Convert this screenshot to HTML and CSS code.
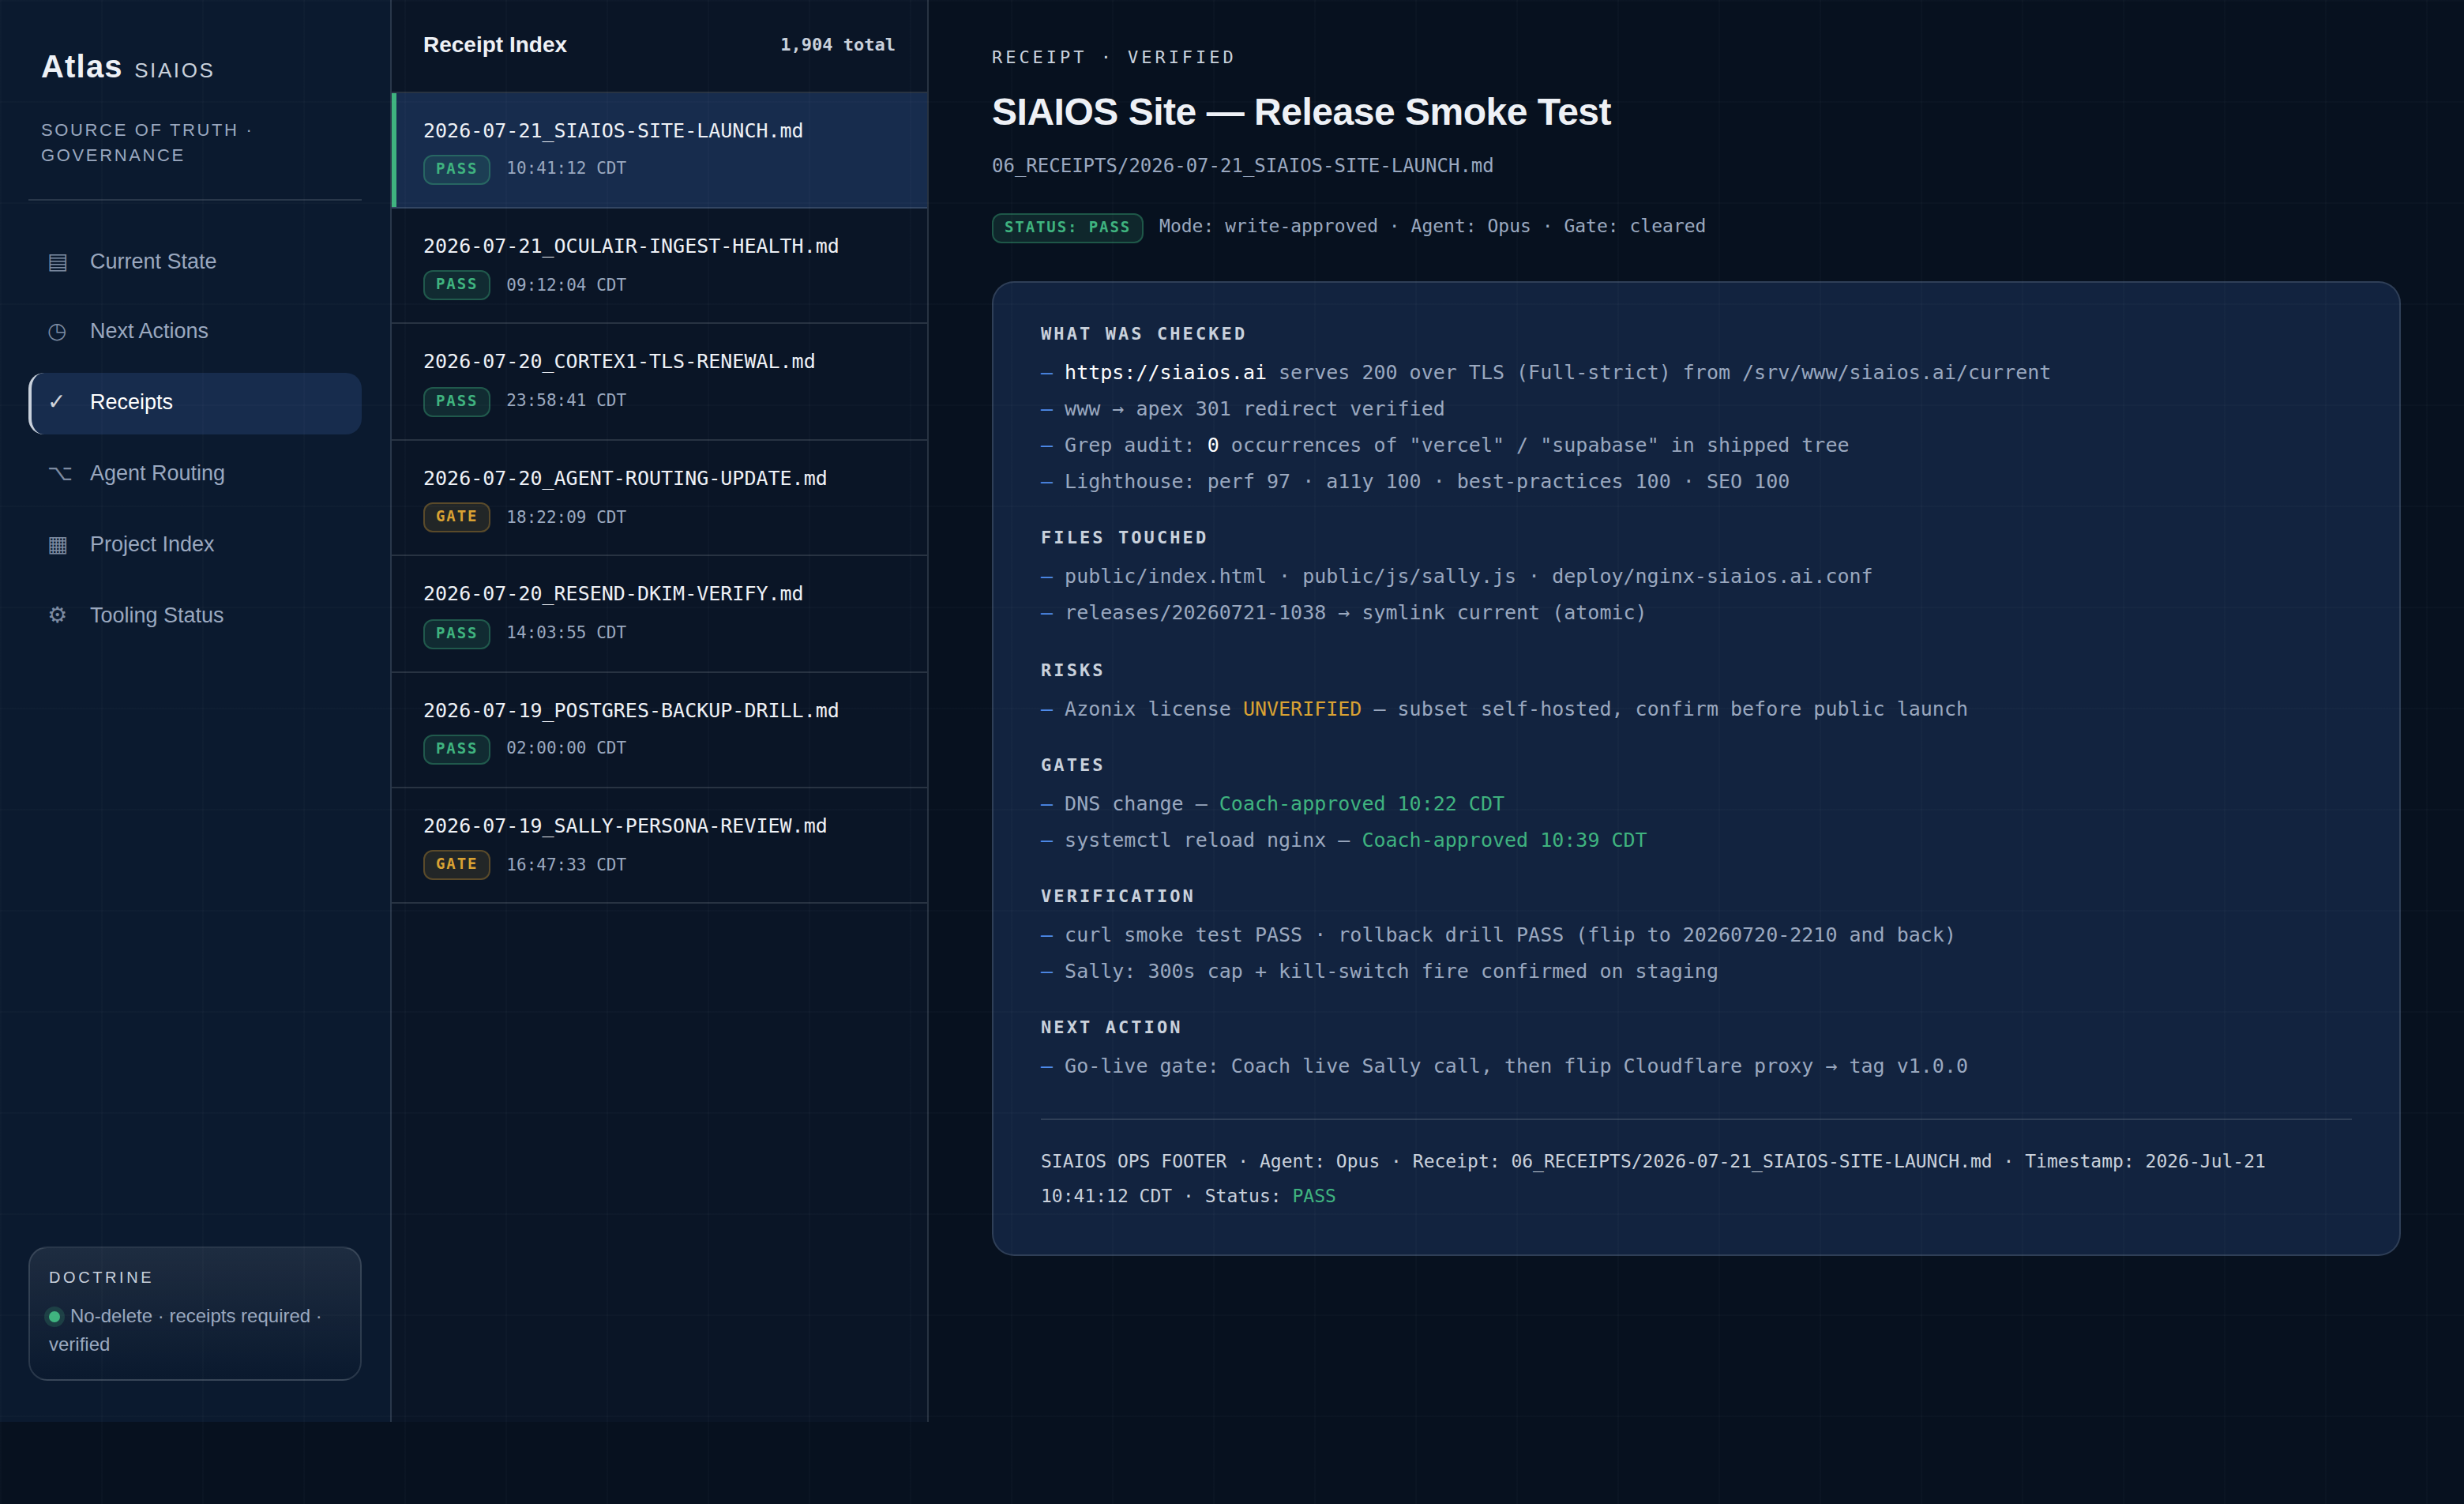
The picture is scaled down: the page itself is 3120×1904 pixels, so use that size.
FILE: index.html
```html
<!DOCTYPE html>
<html lang="en">
<head>
    <meta charset="UTF-8">
    <meta name="viewport" content="width=device-width, initial-scale=1.0">
    <title>Atlas — Receipts</title>
    <link rel="stylesheet" href="styles.css">
</head>
<body>
    <div class="app">
        <aside class="sidebar">
            <div class="brand">
                <div class="logo">Atlas <span>SIAIOS</span></div>
                <div class="tagline">SOURCE OF TRUTH · GOVERNANCE</div>
            </div>
            <nav class="nav">
                <a class="nav-item"><span class="icon">▤</span>Current State</a>
                <a class="nav-item"><span class="icon">◷</span>Next Actions</a>
                <a class="nav-item active"><span class="icon">✓</span>Receipts</a>
                <a class="nav-item"><span class="icon">⌥</span>Agent Routing</a>
                <a class="nav-item"><span class="icon">▦</span>Project Index</a>
                <a class="nav-item"><span class="icon">⚙</span>Tooling Status</a>
            </nav>
            <div class="doctrine">
                <div class="doctrine-title">DOCTRINE</div>
                <div class="doctrine-text"><span class="dot"></span>No-delete · receipts required · verified</div>
            </div>
        </aside>

        <section class="index">
            <header class="index-head">
                <h2>Receipt Index</h2>
                <span class="count">1,904 total</span>
            </header>
            <div class="receipts">
                <div class="receipt active">
                    <div class="name">2026-07-21_SIAIOS-SITE-LAUNCH.md</div>
                    <div class="meta"><span class="badge pass">PASS</span><span class="time">10:41:12 CDT</span></div>
                </div>
                <div class="receipt">
                    <div class="name">2026-07-21_OCULAIR-INGEST-HEALTH.md</div>
                    <div class="meta"><span class="badge pass">PASS</span><span class="time">09:12:04 CDT</span></div>
                </div>
                <div class="receipt">
                    <div class="name">2026-07-20_CORTEX1-TLS-RENEWAL.md</div>
                    <div class="meta"><span class="badge pass">PASS</span><span class="time">23:58:41 CDT</span></div>
                </div>
                <div class="receipt">
                    <div class="name">2026-07-20_AGENT-ROUTING-UPDATE.md</div>
                    <div class="meta"><span class="badge gate">GATE</span><span class="time">18:22:09 CDT</span></div>
                </div>
                <div class="receipt">
                    <div class="name">2026-07-20_RESEND-DKIM-VERIFY.md</div>
                    <div class="meta"><span class="badge pass">PASS</span><span class="time">14:03:55 CDT</span></div>
                </div>
                <div class="receipt">
                    <div class="name">2026-07-19_POSTGRES-BACKUP-DRILL.md</div>
                    <div class="meta"><span class="badge pass">PASS</span><span class="time">02:00:00 CDT</span></div>
                </div>
                <div class="receipt">
                    <div class="name">2026-07-19_SALLY-PERSONA-REVIEW.md</div>
                    <div class="meta"><span class="badge gate">GATE</span><span class="time">16:47:33 CDT</span></div>
                </div>
            </div>
        </section>

        <main class="detail">
            <div class="eyebrow">RECEIPT · VERIFIED</div>
            <h1>SIAIOS Site — Release Smoke Test</h1>
            <div class="path">06_RECEIPTS/2026-07-21_SIAIOS-SITE-LAUNCH.md</div>
            <div class="status">
                <span class="badge pass">STATUS: PASS</span>
                <span>Mode: write-approved · Agent: Opus · Gate: cleared</span>
            </div>

            <article class="card">
                <div class="block">
                    <h3>WHAT WAS CHECKED</h3>
                    <ul>
                        <li><b>https://siaios.ai</b> serves 200 over TLS (Full-strict) from /srv/www/siaios.ai/current</li>
                        <li>www → apex 301 redirect verified</li>
                        <li>Grep audit: <b>0</b> occurrences of "vercel" / "supabase" in shipped tree</li>
                        <li>Lighthouse: perf 97 · a11y 100 · best-practices 100 · SEO 100</li>
                    </ul>
                </div>
                <div class="block">
                    <h3>FILES TOUCHED</h3>
                    <ul>
                        <li>public/index.html · public/js/sally.js · deploy/nginx-siaios.ai.conf</li>
                        <li>releases/20260721-1038 → symlink current (atomic)</li>
                    </ul>
                </div>
                <div class="block">
                    <h3>RISKS</h3>
                    <ul>
                        <li>Azonix license <span class="warn">UNVERIFIED</span> — subset self-hosted, confirm before public launch</li>
                    </ul>
                </div>
                <div class="block">
                    <h3>GATES</h3>
                    <ul>
                        <li>DNS change — <span class="ok">Coach-approved 10:22 CDT</span></li>
                        <li>systemctl reload nginx — <span class="ok">Coach-approved 10:39 CDT</span></li>
                    </ul>
                </div>
                <div class="block">
                    <h3>VERIFICATION</h3>
                    <ul>
                        <li>curl smoke test PASS · rollback drill PASS (flip to 20260720-2210 and back)</li>
                        <li>Sally: 300s cap + kill-switch fire confirmed on staging</li>
                    </ul>
                </div>
                <div class="block">
                    <h3>NEXT ACTION</h3>
                    <ul>
                        <li>Go-live gate: Coach live Sally call, then flip Cloudflare proxy → tag v1.0.0</li>
                    </ul>
                </div>
                <footer class="ops-footer">SIAIOS OPS FOOTER · Agent: Opus · Receipt: 06_RECEIPTS/2026-07-21_SIAIOS-SITE-LAUNCH.md · Timestamp: 2026-Jul-21 10:41:12 CDT · Status: <span class="ok">PASS</span></footer>
            </article>
        </main>
    </div>
</body>
</html>
```
FILE: styles.css
```css
:root {
    --bg: #07111f;
    --sidebar: #0b1a2f;
    --panel: #0a1526;
    --card: #12233f;
    --active: #172c4d;
    --line: rgba(201, 209, 220, 0.16);
    --white: #eef1f6;
    --silver: #c9d1dc;
    --muted: #9aa8bf;
    --blue: #4f8cea;
    --green: #3fb37f;
    --amber: #d9a233;
    --mono: "DejaVu Sans Mono", monospace;
}
* {
    box-sizing: border-box;
    margin: 0;
    padding: 0;
}
body {
    height: 1904px;
    background-color: var(--bg);
    color: var(--white);
    font-family: "Liberation Sans", "DejaVu Sans", sans-serif;
    overflow: hidden;
}
/* faint grid over the whole page */
body::after {
    content: "";
    position: fixed;
    inset: 0;
    pointer-events: none;
    background-image:
        linear-gradient(rgba(201, 209, 220, 0.025) 2px, transparent 2px),
        linear-gradient(90deg, rgba(201, 209, 220, 0.025) 2px, transparent 2px);
    background-size: 128px 128px;
}
.app {
    display: grid;
    grid-template-columns: 496px 680px 1fr;
    height: 1800px;
}

/* Sidebar */
.sidebar {
    display: flex;
    flex-direction: column;
    padding: 56px 36px 52px;
    background-color: var(--sidebar);
    border-right: 2px solid var(--line);
}
.brand {
    padding: 0 16px 39px;
    border-bottom: 2px solid var(--line);
}
.logo {
    font-size: 40px;
    font-weight: bold;
    line-height: 56px;
    letter-spacing: 0.03em;
}
.logo span {
    margin-left: 2px;
    font-size: 26px;
    font-weight: normal;
    line-height: 1;
    letter-spacing: 0.1em;
    color: var(--silver);
}
.tagline {
    margin-top: 37px;
    font-size: 22px;
    line-height: 32px;
    letter-spacing: 0.12em;
    color: var(--muted);
}
.nav {
    display: flex;
    flex-direction: column;
    gap: 12px;
    margin-top: 38px;
}
.nav-item {
    display: flex;
    align-items: baseline;
    height: 78px;
    padding: 17px 20px;
    border-left: 4px solid transparent;
    border-radius: 20px;
    font-size: 27px;
    line-height: 39px;
    color: var(--muted);
}
.nav-item:first-child {
    padding-top: 19px;
}
.nav-item.active {
    background-color: var(--active);
    border-left-color: var(--silver);
    color: #fff;
}
.icon {
    width: 54px;
    font-size: 28px;
    opacity: 0.8;
}
.doctrine {
    margin-top: auto;
    padding: 22px 24px 26px;
    border: 2px solid var(--line);
    border-radius: 24px;
    background-image: linear-gradient(180deg, rgba(201, 209, 220, 0.1), transparent);
}
.doctrine-title {
    margin-bottom: 16px;
    font-size: 20px;
    line-height: 30px;
    letter-spacing: 3.6px;
    color: var(--silver);
}
.doctrine-text {
    font-size: 24px;
    line-height: 36px;
    color: var(--muted);
}
.dot {
    display: inline-block;
    width: 14px;
    height: 14px;
    margin-right: 13px;
    border-radius: 50%;
    background-color: var(--green);
    box-shadow: 0 0 0 6px rgba(63, 179, 127, 0.2);
}

/* Receipt index */
.index {
    background-color: var(--panel);
    border-right: 2px solid var(--line);
}
.index-head {
    display: flex;
    justify-content: space-between;
    align-items: center;
    height: 118px;
    padding: 41px 40px 44px;
    border-bottom: 2px solid var(--line);
}
.index-head h2 {
    font-size: 28px;
    line-height: 31px;
}
.count {
    font-family: var(--mono);
    font-size: 22px;
    font-weight: bold;
    line-height: 25px;
    color: var(--silver);
}
.receipt {
    height: 146px;
    padding: 27px 40px 0;
    border-bottom: 2px solid var(--line);
    font-family: var(--mono);
}
.receipt.active {
    background-color: var(--active);
    box-shadow: inset 6px 0 0 var(--green);
}
.name {
    font-size: 25px;
    line-height: 41px;
}
.meta {
    display: flex;
    align-items: flex-start;
    gap: 20px;
    margin-top: 10px;
}
.time {
    margin-top: 5px;
    font-size: 21px;
    line-height: 24px;
    color: var(--muted);
}
.receipt:nth-child(3),
.receipt:nth-child(5) {
    height: 148px;
}
.receipt:nth-child(3) .meta,
.receipt:nth-child(5) .meta {
    margin-top: 12px;
}
.receipt:nth-child(2) .time,
.receipt:nth-child(4) .time,
.receipt:nth-child(7) .time {
    margin-top: 7px;
}
.badge {
    padding: 4px 14px 8px;
    border: 2px solid;
    border-radius: 12px;
    font-size: 19px;
    font-weight: bold;
    line-height: 22px;
    letter-spacing: 0.1em;
}
.pass {
    color: var(--green);
    background-color: rgba(63, 179, 127, 0.14);
    border-color: rgba(63, 179, 127, 0.35);
}
.gate {
    color: var(--amber);
    background-color: rgba(217, 162, 51, 0.12);
    border-color: rgba(217, 162, 51, 0.3);
}

/* Receipt detail */
.detail {
    padding: 60px 80px 0;
    font-family: var(--mono);
}
.eyebrow {
    font-size: 22px;
    line-height: 25px;
    letter-spacing: 0.18em;
    color: var(--silver);
}
h1 {
    margin-top: 30px;
    font-family: "Liberation Sans", sans-serif;
    font-size: 48px;
    line-height: 53px;
    letter-spacing: -0.01em;
}
.path {
    margin-top: 28px;
    font-size: 24px;
    line-height: 28px;
    color: var(--muted);
}
.status {
    display: flex;
    align-items: baseline;
    gap: 20px;
    margin-top: 46px;
    font-size: 23px;
    line-height: 26px;
    color: var(--muted);
}
.card {
    margin-top: 48px;
    padding: 52px 60px;
    background-color: var(--card);
    border: 2px solid var(--line);
    border-radius: 28px;
}
.block + .block {
    margin-top: 35px;
}
.block:nth-child(3) {
    margin-top: 37px;
}
.block h3 {
    margin-bottom: 14px;
    font-size: 22px;
    line-height: 25px;
    letter-spacing: 0.14em;
    color: var(--silver);
}
.block ul {
    list-style: none;
}
.block li {
    padding-bottom: 1px;
    font-size: 25px;
    line-height: 45px;
    color: var(--muted);
}
.block li::before {
    content: "— ";
    color: var(--blue);
}
.block b {
    font-weight: normal;
    color: #fff;
}
.block .warn {
    color: var(--amber);
}
.ok {
    color: var(--green);
}
.ops-footer {
    margin-top: 43px;
    padding-top: 30px;
    border-top: 2px solid var(--line);
    font-size: 23px;
    line-height: 44px;
    color: var(--silver);
}
```
